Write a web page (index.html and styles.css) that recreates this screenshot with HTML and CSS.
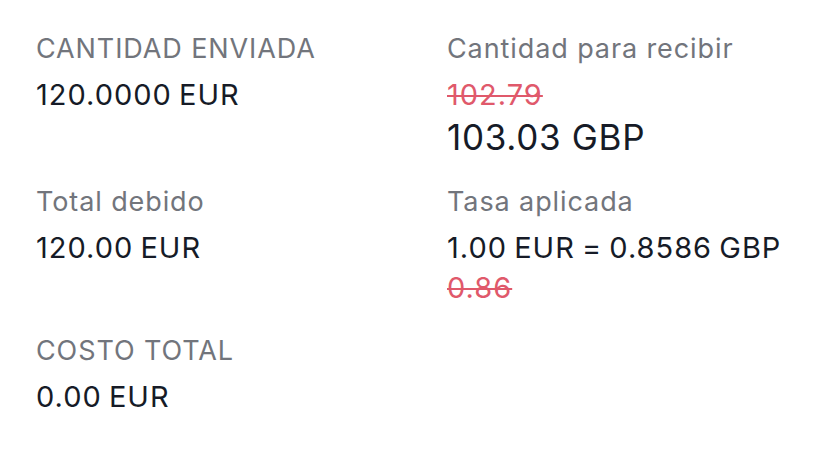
FILE: index.html
```html
<!DOCTYPE html>
<html lang="es">
<head>
    <meta charset="UTF-8">
    <meta name="viewport" content="width=device-width, initial-scale=1.0">
    <title>Resumen de transferencia</title>
    <link rel="stylesheet" href="styles.css">
</head>
<body>
    <div class="summary">
        <div class="item">
            <div class="label">CANTIDAD ENVIADA</div>
            <div class="value">120.0000 EUR</div>
        </div>
        <div class="item">
            <div class="label">Cantidad para recibir</div>
            <div class="value old">102.79</div>
            <div class="value big">103.03 GBP</div>
        </div>

        <div class="item">
            <div class="label">Total debido</div>
            <div class="value">120.00 EUR</div>
        </div>
        <div class="item">
            <div class="label">Tasa aplicada</div>
            <div class="value">1.00 EUR = 0.8586 GBP</div>
            <div class="value old">0.86</div>
        </div>

        <div class="item">
            <div class="label">COSTO TOTAL</div>
            <div class="value">0.00 EUR</div>
        </div>
    </div>
</body>
</html>
```

FILE: styles.css
```css
body {
    margin: 0;
    background-color: #ffffff;
    font-family: Inter, "Noto Sans", sans-serif;
}

.summary {
    display: grid;
    grid-template-columns: 411px 1fr;
    row-gap: 25px;
    padding: 31px 36px 0 36px;
}

.label {
    font-size: 27px;
    line-height: 36px;
    letter-spacing: 0.9px;
    color: #72757c;
}

.value {
    font-size: 29px;
    line-height: 40px;
    letter-spacing: 1px;
    word-spacing: -2px;
    color: #161b27;
}

.label + .value {
    margin-top: 8px;
}

.value.big {
    font-size: 35px;
    line-height: 44px;
    letter-spacing: 0.7px;
    word-spacing: 0;
}

.value.old {
    color: #e0596b;
    text-decoration: line-through;
    text-decoration-thickness: 2px;
}
```
